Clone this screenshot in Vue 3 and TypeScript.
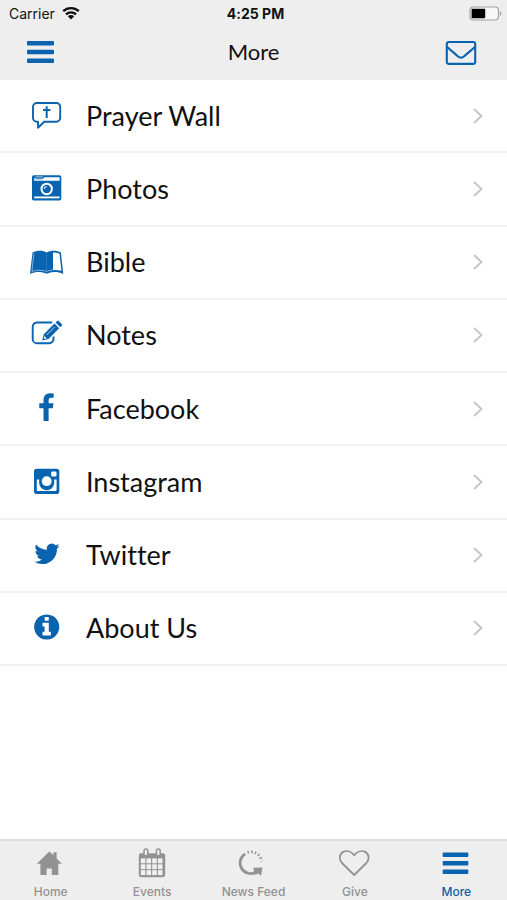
<script setup lang="ts">
type IconName = 'prayer' | 'photos' | 'bible' | 'notes' | 'facebook' | 'instagram' | 'twitter' | 'info'
type TabName = 'home' | 'events' | 'news' | 'give' | 'more'

interface MenuItem {
  label: string
  icon: IconName
}

interface Tab {
  label: string
  icon: TabName
}

const items: MenuItem[] = [
  { label: 'Prayer Wall', icon: 'prayer' },
  { label: 'Photos', icon: 'photos' },
  { label: 'Bible', icon: 'bible' },
  { label: 'Notes', icon: 'notes' },
  { label: 'Facebook', icon: 'facebook' },
  { label: 'Instagram', icon: 'instagram' },
  { label: 'Twitter', icon: 'twitter' },
  { label: 'About Us', icon: 'info' },
]

const tabs: Tab[] = [
  { label: 'Home', icon: 'home' },
  { label: 'Events', icon: 'events' },
  { label: 'News Feed', icon: 'news' },
  { label: 'Give', icon: 'give' },
  { label: 'More', icon: 'more' },
]

const activeTab: TabName = 'more'
</script>

<template>
  <div class="screen">
    <header class="top">
      <div class="status">
        <div class="carrier">
          <span>Carrier</span>
          <svg class="wifi" viewBox="0 0 18 14" aria-hidden="true">
            <g fill="none" stroke="#111" stroke-width="2.3">
              <path d="M1.2 5.2a11.2 11.2 0 0 1 15.6 0" />
              <path d="M4 8.3a7.2 7.2 0 0 1 10 0" />
            </g>
            <path d="M5.8 10.2a4.6 4.6 0 0 1 6.4 0L9 13.4z" fill="#111" />
          </svg>
        </div>
        <span class="time">4:25 PM</span>
        <svg class="battery" viewBox="0 0 33 15" aria-hidden="true">
          <rect x="1" y="1" width="28.500" height="13" rx="3.500" fill="#f7f7f7" stroke="#a2a2a2" stroke-width="1.200" />
          <rect x="2.600" y="2.700" width="13.600" height="9.600" rx="1" fill="#000" />
          <path d="M30.800 5.500c2 .6 2 3.400 0 4z" fill="#a2a2a2" />
        </svg>
      </div>
      <nav class="bar" aria-label="Page">
        <button class="bar-button" type="button" aria-label="Menu">
          <svg class="bar-icon" viewBox="0 0 32 26" aria-hidden="true">
            <g fill="#0a63ae">
              <rect x="2" y="2" width="27" height="4.600" rx="1" />
              <rect x="2" y="10.700" width="27" height="4.600" rx="1" />
              <rect x="2" y="19.400" width="27" height="4.600" rx="1" />
            </g>
          </svg>
        </button>
        <h1 class="title">More</h1>
        <button class="bar-button" type="button" aria-label="Messages">
          <svg class="bar-icon" viewBox="0 0 32 26" aria-hidden="true">
            <g fill="none" stroke="#0a63ae" stroke-width="2.100" stroke-linejoin="round">
              <rect x="1.800" y="3" width="28.400" height="21.900" rx="2" />
              <path d="M2.200 8c3.400 3.300 7.500 6.200 10.600 9.300 2.300 2.100 4.100 2.100 6.400 0C22.300 14.200 26.400 11.300 29.800 8" />
            </g>
          </svg>
        </button>
      </nav>
    </header>

    <main class="content">
      <ul class="menu">
        <li v-for="item in items" :key="item.label" class="menu-item">
          <a class="row" href="#">
            <svg class="row-icon" viewBox="0 0 36 36" aria-hidden="true">
              <g v-if="item.icon === 'prayer'" fill="none" stroke="currentColor" stroke-width="1.900" stroke-linejoin="round">
                <path d="M9 5h19.200a4 4 0 0 1 4 4v10.700a4 4 0 0 1-4 4H16.200L10 29.700v-6H9a4 4 0 0 1-4-4V9a4 4 0 0 1 4-4z" />
                <path d="M18.700 8.300v11.600M15 11.900h7.400" stroke-width="2" stroke-linejoin="miter" />
              </g>
              <g v-else-if="item.icon === 'photos'">
                <rect x="4" y="4.200" width="29.300" height="25.400" rx="1.800" fill="currentColor" />
                <path d="M6.200 7.200h9l1.600-1h14.800v3.600H6.200z" fill="#fff" />
                <path d="M7.400 5.300h7.600v1.200H7.400z" fill="#fff" opacity=".55" />
                <path d="M7.400 7h8.400l-1.600 1.500H7.400z" fill="currentColor" opacity=".6" />
                <circle cx="18.700" cy="18" r="7.200" fill="currentColor" />
                <circle cx="18.700" cy="18" r="6.200" fill="#fff" />
                <circle cx="18.700" cy="18" r="4.200" fill="currentColor" />
                <path d="M16.200 18a2.500 2.500 0 0 1 2.500-2.500" fill="none" stroke="#fff" stroke-width="1" />
                <path d="M6.200 25.500h25.400v1.800H6.200z" fill="#fff" />
              </g>
              <g v-else-if="item.icon === 'bible'">
                <path d="M4.500 8.500C9 6 15 6 18.700 8.600 22.400 6 28.400 6 32.900 8.500L35.300 30c-5-2.200-10.300-2.400-14.500-1.100-1.200.8-3 .8-4.200 0C12.400 27.600 7 27.800 2 30z" fill="currentColor" />
                <path d="M25 8.500c2.300-.1 4.400.3 6.500 1.200l1.900 17.100c-2.800-.8-5.600-1.100-8.400-.8z" fill="#fff" />
                <path d="M5.800 9.400 4 27.400c5-1.700 10.600-1.400 14.700 0 2-1 4-1.300 6.300-1.300" fill="none" stroke="#fff" stroke-width=".6" opacity=".8" />
                <path d="M18.700 9.600v16.600" stroke="#fff" stroke-width=".4" opacity=".4" />
              </g>
              <g v-else-if="item.icon === 'notes'">
                <path d="M24.200 5.500H9a4.300 4.300 0 0 0-4.300 4.300v12.100A4.300 4.300 0 0 0 9 26.200h12.200a4.300 4.300 0 0 0 4.300-4.300v-2.500" fill="none" stroke="currentColor" stroke-width="1.900" />
                <path d="m14.200 23.600 1.600-6.300L26.500 6.600l4.700 4.700-10.700 10.700z" fill="currentColor" />
                <path d="m27.600 5.500 1.400-1.400c.5-.5 1.200-.5 1.700 0l3 3c.5.5.5 1.200 0 1.700l-1.400 1.400z" fill="currentColor" />
                <path d="m18.600 18 8-8" stroke="#fff" stroke-width=".7" />
                <path d="m16.400 19.100 2.300 2.300-1.900.5-.9-.9z" fill="#fff" />
              </g>
              <path
                v-else-if="item.icon === 'facebook'"
                transform="translate(3.300 2.200) scale(.01665)"
                fill="currentColor"
                d="M1343 12v264h-157q-86 0-116 36t-30 108v189h293l-39 296h-254v759h-306v-759h-255v-296h255v-218q0-186 104-288.5t277-102.5q147 0 228 12z"
              />
              <g v-else-if="item.icon === 'instagram'">
                <rect x="6" y="4.700" width="25.300" height="25.300" rx="2.800" fill="currentColor" />
                <path d="M8.800 15.500h2.500c-2.400 14.300 17.200 14.300 14.800 0h2.500v10.300a1.300 1.300 0 0 1-1.300 1.300H10.100a1.300 1.300 0 0 1-1.300-1.300z" fill="#fff" />
                <circle cx="18.700" cy="17.200" r="4.900" fill="#fff" />
                <rect x="23.200" y="7.500" width="5.300" height="5" rx=".9" fill="#fff" />
              </g>
              <path
                v-else-if="item.icon === 'twitter'"
                transform="translate(4.600 2.500) scale(.016)"
                fill="currentColor"
                d="M1684 408q-67 98-162 167 1 14 1 42 0 130-38 259.5t-115.5 248.5-184.5 210.5-258 146-323 54.5q-271 0-496-145 35 4 78 4 225 0 401-138-105-2-188-64.5t-114-159.5q33 5 61 5 43 0 85-11-112-23-185.5-111.5t-73.5-205.5v-4q68 38 146 41-66-44-105-115t-39-154q0-88 44-163 121 149 294.5 238.5t371.5 99.5q-8-38-8-74 0-134 94.5-228.5t228.5-94.5q140 0 236 102 109-21 205-78-37 115-142 178 93-10 186-50z"
              />
              <path
                v-else
                transform="translate(4 2.300) scale(.0164)"
                fill="currentColor"
                d="M1152 1376v-160q0-14-9-23t-23-9h-96v-512q0-14-9-23t-23-9h-320q-14 0-23 9t-9 23v160q0 14 9 23t23 9h96v320h-96q-14 0-23 9t-9 23v160q0 14 9 23t23 9h448q14 0 23-9t9-23zm-128-896v-160q0-14-9-23t-23-9h-192q-14 0-23 9t-9 23v160q0 14 9 23t23 9h192q14 0 23-9t9-23zm640 416q0 209-103 385.5t-279.5 279.5-385.5 103-385.5-103-279.5-279.5-103-385.5 103-385.5 279.5-279.5 385.5-103 385.5 103 279.5 279.5 103 385.5z"
              />
            </svg>
            <span class="row-label">{{ item.label }}</span>
            <svg class="chevron" viewBox="0 0 12 18" aria-hidden="true">
              <path d="m2 2 7.500 7L2 16" fill="none" stroke="#c6c6c8" stroke-width="2" />
            </svg>
          </a>
        </li>
      </ul>
    </main>

    <nav class="tabs" aria-label="Sections">
      <a
        v-for="tab in tabs"
        :key="tab.icon"
        href="#"
        class="tab"
        :class="{ active: tab.icon === activeTab }"
        :aria-current="tab.icon === activeTab ? 'page' : undefined"
      >
        <svg class="tab-icon" viewBox="0 0 32 32" aria-hidden="true">
          <g v-if="tab.icon === 'home'" fill="currentColor">
            <path d="M14.300 4.500 1.800 16.700h3.600V28h6.200v-6.600h5.200V28h6.500V16.700h3.600L21.600 11.400V5.200h-3.200v3.100z" />
          </g>
          <g v-else-if="tab.icon === 'events'">
            <rect x="2.800" y="6.200" width="26.400" height="24" rx="2.400" fill="currentColor" />
            <g fill="#f1f1f1">
              <template v-for="r in 3" :key="r">
                <rect v-for="c in 4" :key="c" :x="4.8 + (c - 1) * 5.7" :y="11.4 + (r - 1) * 5.9" width="4.600" height="4.900" />
              </template>
            </g>
            <g fill="#efefef" stroke="currentColor" stroke-width="1.500">
              <rect x="8" y="2" width="3.800" height="7" rx="1.900" />
              <rect x="20.400" y="2" width="3.800" height="7" rx="1.900" />
            </g>
          </g>
          <g v-else-if="tab.icon === 'news'" fill="none" stroke="currentColor">
            <path d="M8.200 6.900A10.400 10.400 0 0 0 19.200 25" stroke-width="2.800" />
            <path d="M10.500 5.400A10.800 10.800 0 0 1 24.600 14.500" stroke-width="2.600" stroke-dasharray="1.500 2.200" />
            <path d="m16.200 20.800 9.300-.3-1.500 8.200-2.500-2.200-3.500 1.200z" fill="currentColor" stroke="none" />
          </g>
          <path
            v-else-if="tab.icon === 'give'"
            d="M15.200 28 3 16C-.4 12.400.4 6.800 4.200 4.900c3.900-2 8.200-.2 11 3.400 2.800-3.600 7.100-5.400 11-3.400 3.800 1.900 4.600 7.500 1.200 11.100z"
            fill="none"
            stroke="currentColor"
            stroke-width="1.800"
            stroke-linejoin="round"
          />
          <g v-else fill="currentColor">
            <rect x="2.700" y="5.400" width="25.600" height="4.600" rx=".8" />
            <rect x="2.700" y="13.900" width="25.600" height="4.600" rx=".8" />
            <rect x="2.700" y="22.400" width="25.600" height="4.600" rx=".8" />
          </g>
        </svg>
        <span>{{ tab.label }}</span>
      </a>
    </nav>
  </div>
</template>

<style>
body {
  margin: 0;
  background: #fff;
}
</style>

<style scoped>
.screen {
  display: flex;
  flex-direction: column;
  min-height: 100vh;
  background: #fff;
  color: #111;
  font-family: Lato, 'Open Sans', sans-serif;
  font-variant-ligatures: none;
}

.top {
  background: #eee;
}

.status {
  display: grid;
  grid-template-columns: 1fr auto 1fr;
  align-items: center;
  height: 26px;
  padding: 0 5px 0 9px;
  font-family: Inter, Roboto, sans-serif;
  font-size: 14px;
}

.carrier {
  display: flex;
  align-items: center;
  gap: 7px;
}

.wifi {
  width: 18px;
  height: 14px;
}

.time {
  font-weight: 700;
}

.battery {
  width: 33px;
  height: 15px;
  justify-self: end;
}

.bar {
  display: grid;
  grid-template-columns: 1fr auto 1fr;
  align-items: center;
  height: 52px;
  padding: 0 30px 2px 25px;
}

.bar-button {
  display: flex;
  padding: 0;
  border: 0;
  background: none;
  cursor: pointer;
}

.bar-button:last-child {
  justify-self: end;
}

.bar-icon {
  width: 32px;
  height: 26px;
}

.title {
  margin: 0;
  padding-left: 5px;
  font-size: 22px;
  font-weight: 400;
  line-height: 28px;
}

.content {
  flex: 1;
}

.menu {
  display: grid;
  grid-auto-rows: 1fr;
  min-height: 586px;
  margin: 0;
  padding: 0;
  list-style: none;
}

.menu-item {
  display: flex;
  border-bottom: 2px solid #f1f1f1;
}

.row {
  display: flex;
  flex: 1;
  align-items: center;
  padding: 0 23px 0 28px;
  color: inherit;
  text-decoration: none;
}

.row-icon {
  width: 36px;
  height: 36px;
  margin-right: 22px;
  color: #0a63ae;
}

.row-label {
  flex: 1;
  font-size: 27px;
  line-height: 36px;
}

.chevron {
  width: 12px;
  height: 18px;
}

.tabs {
  display: grid;
  grid-template-columns: repeat(5, 1fr);
  height: 59px;
  border-top: 2px solid #dedede;
  background: #eee;
}

.tab {
  display: flex;
  flex-direction: column;
  align-items: center;
  gap: 5px;
  padding-top: 6px;
  color: #929292;
  font-family: Inter, Roboto, sans-serif;
  font-size: 12px;
  font-weight: 500;
  line-height: 16px;
  text-decoration: none;
}

.tab.active {
  color: #0a63ae;
}

.tab-icon {
  width: 32px;
  height: 32px;
}
</style>
